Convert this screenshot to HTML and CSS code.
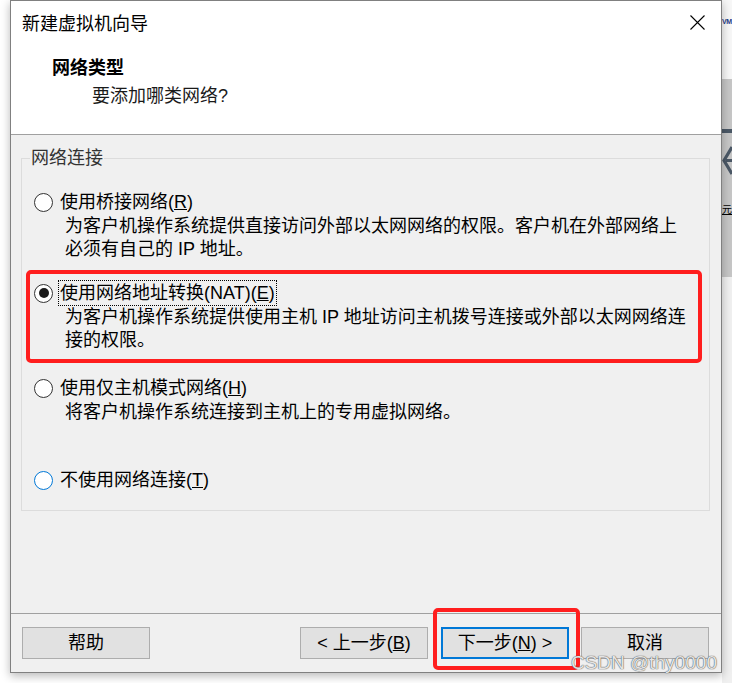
FILE: index.html
```html
<!DOCTYPE html>
<html lang="zh-CN">
<head>
<meta charset="utf-8">
<title>新建虚拟机向导</title>
<link rel="stylesheet" href="styles.css">
</head>
<body>
<div class="screen">
  <div class="gutter"></div>
  <div class="dialog">
    <div class="header">
      <div class="titlebar">
        <span class="title">新建虚拟机向导</span>
        <svg class="close" width="15" height="15" viewBox="0 0 15 15"><path d="M0.5 0.5L14.5 14.5M14.5 0.5L0.5 14.5" stroke="#000" stroke-width="1.1" fill="none"/></svg>
      </div>
      <div class="heading">网络类型</div>
      <div class="subheading">要添加哪类网络?</div>
    </div>
    <div class="body">
      <fieldset class="group">
        <legend class="legend">网络连接</legend>
        <div class="opt">
          <div class="opt-row"><span class="radio"></span><span class="label">使用桥接网络(<u>R</u>)</span></div>
          <div class="desc">为客户机操作系统提供直接访问外部以太网网络的权限。客户机在外部网络上<br>必须有自己的 IP 地址。</div>
        </div>
        <div class="opt opt-nat">
          <div class="opt-row"><span class="radio checked"></span><span class="label focus">使用网络地址转换(NAT)(<u>E</u>)</span></div>
          <div class="desc">为客户机操作系统提供使用主机 IP 地址访问主机拨号连接或外部以太网网络连<br>接的权限。</div>
          <div class="annot annot-nat"></div>
        </div>
        <div class="opt opt-host">
          <div class="opt-row"><span class="radio"></span><span class="label">使用仅主机模式网络(<u>H</u>)</span></div>
          <div class="desc">将客户机操作系统连接到主机上的专用虚拟网络。</div>
        </div>
        <div class="opt opt-none">
          <div class="opt-row"><span class="radio hover"></span><span class="label">不使用网络连接(<u>T</u>)</span></div>
        </div>
      </fieldset>
    </div>
    <div class="footer">
      <button class="btn">帮助</button>
      <div class="btn-group">
        <button class="btn btn-back">&lt; 上一步(<u>B</u>)</button>
        <div class="next-wrap">
          <button class="btn btn-next">下一步(<u>N</u>) &gt;</button>
          <div class="annot annot-next"></div>
        </div>
        <button class="btn">取消</button>
      </div>
    </div>
  </div>
  <div class="backapp">
    <div class="back-top"><span class="back-logo">VM</span></div>
    <div class="back-panel">
      <div class="back-bar"></div>
      <svg class="back-chev" width="10" height="30" viewBox="0 0 10 30"><path d="M10 1L2 14.5L10 28M4 14.5H10" stroke="#4b5866" stroke-width="3.2" fill="none"/></svg>
      <span class="back-text">元</span>
    </div>
    <div class="back-bottom"></div>
  </div>
  <div class="watermark">CSDN @thy0000</div>
</div>
</body>
</html>
```
FILE: styles.css
```css
html, body {
  margin: 0;
  padding: 0;
  background: #ffffff;
}
body {
  font-family: "Liberation Sans", "Noto Sans CJK SC", sans-serif;
  font-size: 18px;
  color: #000;
}
.screen {
  position: relative;
  display: flex;
  width: 732px;
  height: 683px;
  overflow: hidden;
}
.gutter {
  width: 10px;
  flex: none;
  background: #ffffff;
}
.dialog {
  width: 712px;
  height: 673px;
  box-sizing: border-box;
  border: 1px solid #808080;
  background: #f0f0f0;
  display: flex;
  flex-direction: column;
  flex: none;
  box-shadow: 0 3px 9px rgba(0, 0, 0, 0.28);
  position: relative;
  z-index: 1;
}
.header {
  height: 134px;
  box-sizing: border-box;
  background: #ffffff;
  border-bottom: 1px solid #a0a0a0;
  padding: 9px 0 0 0;
}
.titlebar {
  display: flex;
  justify-content: space-between;
  align-items: center;
  height: 24px;
  padding: 0 16px 0 11px;
}
.title {
  line-height: 24px;
  font-family: "Noto Sans CJK SC", sans-serif;
}
.close {
  display: block;
}
.heading {
  margin-top: 22px;
  padding-left: 41px;
  line-height: 24px;
  font-weight: bold;
}
.subheading {
  margin-top: 4px;
  padding-left: 81px;
  line-height: 24px;
  color: #1a1a1a;
}
.body {
  height: 479px;
  box-sizing: border-box;
  border-bottom: 1px solid #a0a0a0;
  padding-top: 11px;
}
.group {
  margin: 0 11px 0 10px;
  padding: 20px 12px 18px 12px;
  border: 1px solid #dcdcdc;
  min-width: 0;
}
.legend {
  margin-left: -4px;
  padding: 0 1px;
  line-height: 24px;
  color: #333;
}
.opt {
  position: relative;
}
.opt-nat {
  margin-top: 20px;
}
.opt-host {
  margin-top: 24px;
}
.opt-none {
  margin-top: 44px;
}
.opt-row {
  display: flex;
  align-items: center;
  height: 24px;
}
.radio {
  width: 19px;
  height: 19px;
  box-sizing: border-box;
  border-radius: 50%;
  border: 1px solid #333333;
  background: #ffffff;
  margin-right: 6px;
  flex: none;
  display: flex;
  align-items: center;
  justify-content: center;
}
.radio.checked::after {
  content: "";
  width: 10px;
  height: 10px;
  border-radius: 50%;
  background: #1a1a1a;
}
.radio.hover {
  border-color: #0078d7;
}
.label {
  line-height: 24px;
  padding: 0 1px;
  white-space: nowrap;
}
.label.focus {
  outline: 1px dotted #000;
  outline-offset: 0;
}
.desc {
  margin-left: 31px;
  margin-top: 1px;
  line-height: 23px;
  white-space: nowrap;
}
.annot {
  position: absolute;
  box-sizing: border-box;
  border: 4px solid #ff1e1e;
  border-radius: 5px;
  pointer-events: none;
}
.annot-nat {
  top: -11px;
  left: -8px;
  width: 676px;
  height: 93px;
}
.footer {
  flex: 1;
  display: flex;
  justify-content: space-between;
  align-items: flex-start;
  padding: 13px 12px 0 11px;
}
.btn-group {
  display: flex;
  gap: 12px;
}
.btn {
  width: 128px;
  height: 32px;
  box-sizing: border-box;
  border: 1px solid #adadad;
  background: #e1e1e1;
  font-family: "Liberation Sans", "Noto Sans CJK SC", sans-serif;
  font-size: 18px;
  color: #000;
  padding: 0;
  line-height: 30px;
  margin: 0;
}
.btn-back {
  margin-right: 1px;
}
.next-wrap {
  position: relative;
}
.btn-next {
  border: 2px solid #0078d7;
  line-height: 28px;
  display: block;
}
.annot-next {
  top: -19px;
  left: -8px;
  width: 147px;
  height: 62px;
}
.backapp {
  width: 10px;
  flex: none;
  display: flex;
  flex-direction: column;
  overflow: hidden;
  background: #f0f0f0;
}
.back-top {
  height: 79px;
  background: #f7f7f7;
  overflow: hidden;
}
.back-logo {
  display: block;
  margin-top: 17px;
  font-family: "Liberation Sans", sans-serif;
  font-weight: bold;
  font-size: 7px;
  line-height: 9px;
  letter-spacing: -0.5px;
  color: #1f3c88;
  white-space: nowrap;
}
.back-panel {
  height: 198px;
  background: #c6c6c6;
  display: flex;
  flex-direction: column;
  overflow: hidden;
}
.back-bar {
  margin-top: 50px;
  height: 4px;
  background: #4b5866;
}
.back-chev {
  display: block;
  margin-top: 13px;
  flex: none;
}
.back-text {
  margin-top: 26px;
  font-family: "Noto Sans CJK SC", sans-serif;
  font-size: 10px;
  line-height: 14px;
  white-space: nowrap;
  text-decoration: underline;
  color: #000;
}
.back-bottom {
  flex: 1;
  background: #f0f0f0;
}
.watermark {
  position: absolute;
  right: 15px;
  bottom: 9px;
  z-index: 2;
  font-family: "Liberation Sans", sans-serif;
  font-size: 19px;
  line-height: 22px;
  color: rgba(255, 255, 255, 0.85);
  text-shadow: 0 0 1px #555, 0 0 1px #555;
  white-space: nowrap;
}
```
